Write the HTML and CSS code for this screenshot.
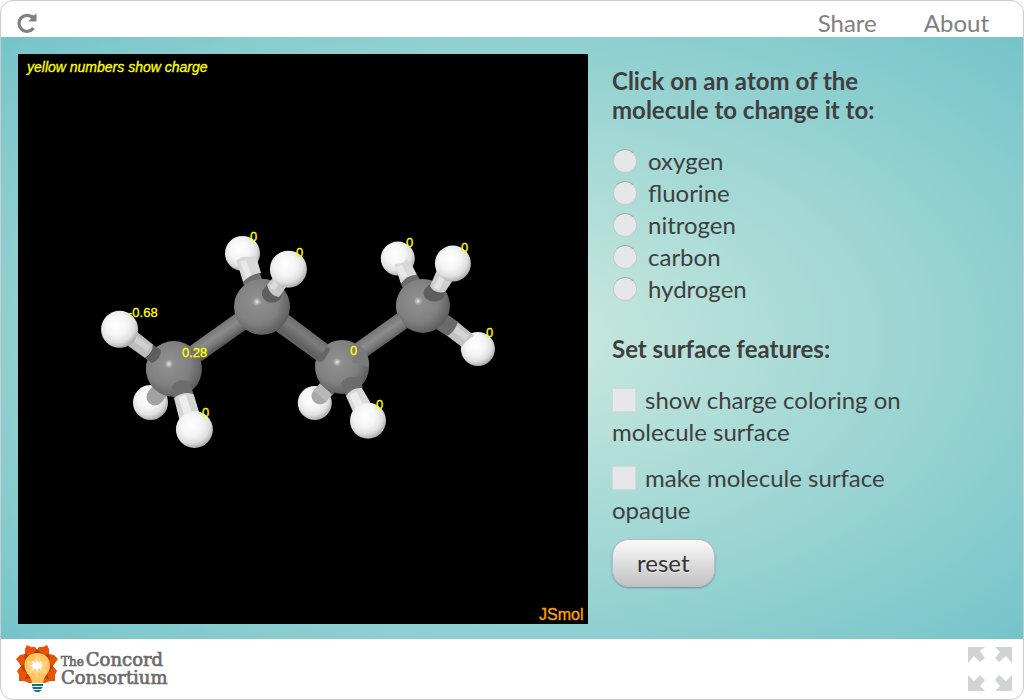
FILE: index.html
```
<!DOCTYPE html>
<html lang="en">
<head>
<meta charset="utf-8">
<title>Molecule charge</title>
<link rel="stylesheet" href="styles.css">
</head>
<body>
<div class="frame">
  <header class="topbar">
    <button class="icon-button reload" type="button" aria-label="Reload">
      <svg width="22" height="22" viewBox="0 0 22 22"><path d="M17.5 16A8 8 0 1 1 17 6" fill="none" stroke="#808080" stroke-width="3.2"/><path d="M12.500 9.400H20.500V1.300L18 3.600L16 2.700L15 6.200Z" fill="#808080"/></svg>
    </button>
    <nav class="links">
      <a href="#share">Share</a>
      <a href="#about">About</a>
    </nav>
  </header>

  <main class="stage">
    <svg class="viewer" viewBox="18 54 570 570" role="img" aria-label="Butane molecule">
      <defs>
        <radialGradient id="h" cx=".42" cy=".38" r=".64">
          <stop offset="0" stop-color="#fff"/><stop offset=".45" stop-color="#f5f5f5"/><stop offset=".75" stop-color="#e0e0e0"/><stop offset="1" stop-color="#a8a8a8"/>
        </radialGradient>
        <radialGradient id="c" cx=".41" cy=".41" r=".65">
          <stop offset="0" stop-color="#eee"/><stop offset=".05" stop-color="#bbb"/><stop offset=".12" stop-color="#8e8e8e"/><stop offset=".6" stop-color="#808080"/><stop offset="1" stop-color="#585858"/>
        </radialGradient>
        <linearGradient id="up1" gradientUnits="userSpaceOnUse" x1="212" y1="331" x2="223" y2="347">
          <stop offset="0" stop-color="#777"/><stop offset=".35" stop-color="#8c8c8c"/><stop offset=".65" stop-color="#767676"/><stop offset="1" stop-color="#4c4c4c"/>
        </linearGradient>
        <linearGradient id="up2" gradientUnits="userSpaceOnUse" x1="376" y1="330" x2="387" y2="346">
          <stop offset="0" stop-color="#777"/><stop offset=".35" stop-color="#8c8c8c"/><stop offset=".65" stop-color="#767676"/><stop offset="1" stop-color="#4c4c4c"/>
        </linearGradient>
        <linearGradient id="down" gradientUnits="userSpaceOnUse" x1="308" y1="329" x2="297" y2="344">
          <stop offset="0" stop-color="#6c6c6c"/><stop offset=".4" stop-color="#7c7c7c"/><stop offset="1" stop-color="#5c5c5c"/>
        </linearGradient>
      </defs>
      <rect x="18" y="54" width="570" height="570"/>
      <g fill="none">
        <circle cx="150.5" cy="402.5" r="17.5" fill="url(#h)"/>
        <circle cx="155" cy="397" r="8.5" fill="#a2a2a2"/>
        <path d="M155 397L166 383" stroke="#a2a2a2" stroke-width="17"/>
        <path d="M162 389L168 381" stroke="#666" stroke-width="17"/>
        <circle cx="314.8" cy="403" r="17" fill="url(#h)"/>
        <circle cx="320" cy="396" r="8.5" fill="#a8a8a8"/>
        <path d="M320 396L327 388" stroke="#b8b8b8" stroke-width="17"/>
        <path d="M326 389L334 380" stroke="#666" stroke-width="17"/>
        <circle cx="242.5" cy="253.4" r="17.5" fill="url(#h)"/>
        <path d="M236.5 260Q239 259 242 257L256 256L261 273Q253 275 243 282Z" fill="#d8d8d8"/>
        <path d="M243 261L249 277" stroke="#e8e8e8" stroke-width="6"/>
        <path d="M243 282Q251 274 260 273L264 287L246 293Z" fill="#707070"/>
        <circle cx="397.8" cy="258.6" r="17" fill="url(#h)"/>
        <path d="M394.5 264Q404 264 406.5 259L411 263L417 275Q407 276 401 284Z" fill="#d8d8d8"/>
        <path d="M399 266L405 277" stroke="#e8e8e8" stroke-width="6"/>
        <path d="M401 284Q406 275 417 275L424 285L406 295Z" fill="#6c6c6c"/>
        <circle cx="477.9" cy="349" r="17" fill="url(#h)"/>
        <path d="M457 321.5L474 335.5Q464 342 462 347L446 335Z" fill="#c2c2c2"/>
        <path d="M455 329L467 338" stroke="#d4d4d4" stroke-width="6"/>
        <path d="M443 311L458 322Q454 333 447 336L430 325Z" fill="#6a6a6a"/>

        <path d="M174 369L262 306.5" stroke="url(#up1)" stroke-width="19"/>
        <circle cx="342" cy="366.9" r="27" fill="url(#c)"/>
        <path d="M262 308L319 349Q330 345 330 350L324 360Q320 364 316 360L262 321Z" fill="#656565"/>
        <path d="M262 306L323 352" stroke="url(#down)" stroke-width="18"/>
        <circle cx="422.9" cy="305.9" r="27" fill="url(#c)"/>
        <path d="M359 351.5L402 321" stroke="url(#up2)" stroke-width="18"/>
        <path d="M358 344Q370 352 369 367L352 362Z" fill="#7a7a7a"/>
        <circle cx="173.9" cy="369" r="28" fill="url(#c)"/>
        <circle cx="262" cy="306.8" r="28" fill="url(#c)"/>

        <path d="M153 345L161 350Q161 359 152 363L145 358Q152 355 153 345Z" fill="#5e5e5e"/>
        <path d="M132 328L153 344.5Q153 353 145 358L124 343Z" fill="#bdbdbd"/>
        <path d="M133 337L149 349" stroke="#cfcfcf" stroke-width="6"/>
        <circle cx="119.6" cy="329.3" r="18.5" fill="url(#h)"/>

        <path d="M171.5 386Q180 377 189.5 382L193.5 394Q183 392 174.5 398Z" fill="#6c6c6c"/>
        <path d="M174 398Q183 391 193.5 394L200 415L180 422Z" fill="#d4d4d4"/>
        <path d="M182 396L188 414" stroke="#ececec" stroke-width="8"/>
        <circle cx="194.4" cy="429.5" r="18.5" fill="url(#h)"/>

        <path d="M267 285L262 291Q261 299 268 302Q277 304 281 298V296Z" fill="#5e5e5e"/>
        <path d="M267 285L275 275L289 283L279 297Q270 296 267 285Z" fill="#c8c8c8"/>
        <path d="M272 289L279 278" stroke="#dcdcdc" stroke-width="6"/>
        <circle cx="288.4" cy="269.2" r="18.5" fill="url(#h)"/>

        <path d="M341 383Q349 373 361 379L362.5 388Q353 387 346 396Z" fill="#6c6c6c"/>
        <path d="M346 396Q352 387 362 388L374 409L354 414Z" fill="#d8d8d8"/>
        <path d="M353 393L361 410" stroke="#ececec" stroke-width="8"/>
        <circle cx="368" cy="420.7" r="18" fill="url(#h)"/>

        <path d="M430 284L424 290Q422 298 430 301Q439 303 444 297L445 292Z" fill="#5e5e5e"/>
        <path d="M430 286L437 270L453 280L445 292Q434 294 430 286Z" fill="#cecece"/>
        <path d="M436 289L443 276" stroke="#e2e2e2" stroke-width="6"/>
        <circle cx="452.9" cy="263.6" r="18" fill="url(#h)"/>
      </g>
      <text class="note" x="27" y="72">yellow numbers show charge</text>
      <g class="charge">
        <text x="128" y="317">-0.68</text>
        <text x="182" y="357">0.28</text>
        <text x="202" y="417">0</text>
        <text x="250" y="241">0</text>
        <text x="296" y="257">0</text>
        <text x="350" y="355">0</text>
        <text x="376" y="409">0</text>
        <text x="406" y="247">0</text>
        <text x="461" y="252">0</text>
        <text x="486" y="337">0</text>
      </g>
      <text class="brand" x="539" y="620">JSmol</text>
    </svg>

    <form class="panel">
      <fieldset class="group">
        <legend class="heading">Click on an atom of the molecule to change it to:</legend>
        <label class="radio"><input type="radio" name="atom">oxygen</label>
        <label class="radio"><input type="radio" name="atom">fluorine</label>
        <label class="radio"><input type="radio" name="atom">nitrogen</label>
        <label class="radio"><input type="radio" name="atom">carbon</label>
        <label class="radio"><input type="radio" name="atom">hydrogen</label>
      </fieldset>
      <fieldset class="group">
        <legend class="heading">Set surface features:</legend>
        <label class="check"><input type="checkbox">show charge coloring on molecule surface</label>
        <label class="check"><input type="checkbox">make molecule surface opaque</label>
      </fieldset>
      <button class="reset" type="reset">reset</button>
    </form>
  </main>

  <footer class="bottombar">
    <a class="logo" href="#home">
      <svg width="42" height="48" viewBox="0 0 42 48">
        <path fill="#e85305" d="M21 5L23 2L27 2L31 0L33 4V9L38 10L42 14L39 18L37 21L41 26L39 30V36L34 36L29 38H13L8 36H3V30L1 26L5 21L3 18L0 14L4 10L9 9V4L11 0L15 2L19 2Z"/>
        <g fill="#b83a0b"><path d="M21 4L26 9H16Z"/><path d="M33 9L34 15L28 11Z"/><path d="M9 9L14 11L8 15Z"/><path d="M37 21L33 28L32 19Z"/><path d="M5 21L10 19L9 28Z"/><path d="M33 34L28 33L31 28Z"/><path d="M9 34L11 28L14 33Z"/></g>
        <path d="M21 8C13 8 8 14 8.5 21C9 28 15 30 16 38H27C28 30 34 28 34 21C34 13 29 8 21 8Z" fill="#ffc45d"/>
        <path d="M21 9L26 17L32 16L29 23L31 29L23 28L21 35L18 28L11 29L13 22L10 16L17 17Z" fill="#ffd37d"/>
        <path d="M21 14.5L22.4 18L25.5 15.8L25 19.3L28 20.5L25 21.8L26 25L22.4 23.3L21 27L19.5 23.3L16 25L17 21.8L14 20.5L17 19.3L16 15.8L19.5 18Z" fill="#fff"/>
        <path d="M16 39H27V41H16ZM16 42H27L25 44H17ZM17 45H26L23 47H20Z" fill="#087887"/>
      </svg>
      <span class="logo-text"><span class="logo-line"><span class="the">The</span>Concord</span><span class="logo-line">Consortium</span></span>
    </a>
    <button class="icon-button expand" type="button" aria-label="Full screen">
      <svg width="44" height="44" viewBox="0 0 44 44" fill="#d1d3d4"><path d="M0 0H17L12 4L17 11L12 15L6 9L0 16Z"/><path d="M44 0H27L32 5L27 11L31 15L38 9L44 16Z"/><path d="M0 44H17L12 39L17 33L12 28L6 34L0 28Z"/><path d="M44 44H27L32 39L27 33L31 28L38 34L44 28Z"/></svg>
    </button>
  </footer>
</div>
</body>
</html>
```
FILE: styles.css
```
* { box-sizing: border-box; }

body {
  margin: 0;
  background: #fff;
  color: #3f3f3f;
  font: 24px/32px Lato, sans-serif;
}

.frame {
  display: flex;
  flex-direction: column;
  min-height: 100vh;
  border: 1px solid #ccc;
  border-radius: 13px;
  overflow: hidden;
}

.topbar {
  display: flex;
  align-items: center;
  justify-content: space-between;
  height: 36px;
  padding: 8px 34px 0 15px;
}

.links { display: flex; gap: 47px; }
.links a { color: #808080; text-decoration: none; }

.icon-button {
  display: flex;
  padding: 0;
  border: 0;
  background: none;
}

.stage {
  flex: 1;
  display: grid;
  grid-template-columns: 570fr 394fr;
  gap: 24px;
  align-items: start;
  padding: 17px 17px 15px;
  background: radial-gradient(ellipse, #cdeadf 0%, #75c4ca 100%);
}

.viewer { display: block; width: 100%; }
.note, .charge, .brand { font-family: "Liberation Sans", Arial, sans-serif; }
.note, .charge { fill: #ff0; stroke: #ff0; stroke-width: 0.3px; }
.note { font-size: 14px; font-style: italic; }
.charge { font-size: 13px; }
.brand { fill: #ffa500; stroke: #ffa500; stroke-width: 0.3px; font-size: 16px; }

.panel { max-width: 300px; padding-top: 12px; }

.group {
  min-width: 0;
  margin: 0 0 29px;
  padding: 0;
  border: 0;
}
.group + .group { margin-bottom: 13px; }

.heading {
  margin-bottom: 21px;
  padding: 0;
  font-weight: 700;
  line-height: 29px;
}

.radio { display: flex; align-items: center; gap: 11px; }
.radio input {
  appearance: none;
  width: 24px;
  height: 24px;
  margin: 0 0 0 1px;
  border: 1px solid #c3c9cc;
  border-top-color: #9da6a8;
  border-radius: 50%;
  background: #e6e7e9;
}

.check { display: block; }
.check + .check { margin-top: 14px; }
.check input {
  appearance: none;
  width: 24px;
  height: 24px;
  margin: 0 9px 0 0;
  border: 1px solid #d9d6db;
  background: #e6e7e9;
  vertical-align: -3px;
}

.reset {
  display: block;
  padding: 7px 24px;
  border: 1px solid #bbb;
  border-radius: 17px;
  background: linear-gradient(#fafafa, #c2c2c2);
  box-shadow: 0 1px 2px rgba(0, 0, 0, 0.3);
  color: #333;
  font: inherit;
  text-shadow: 0 1px 0 #eee;
}

.bottombar {
  display: flex;
  align-items: center;
  justify-content: space-between;
  height: 60px;
  padding: 0 11px 0 15px;
}

.logo {
  display: flex;
  align-items: center;
  gap: 3px;
  color: #6d6b69;
  text-decoration: none;
}
.logo-text {
  display: grid;
  font: 18px/16px "DejaVu Serif", serif;
  -webkit-text-stroke: 0.7px #6d6b69;
}
.the { margin-right: 2px; font-size: 12px; }
```
